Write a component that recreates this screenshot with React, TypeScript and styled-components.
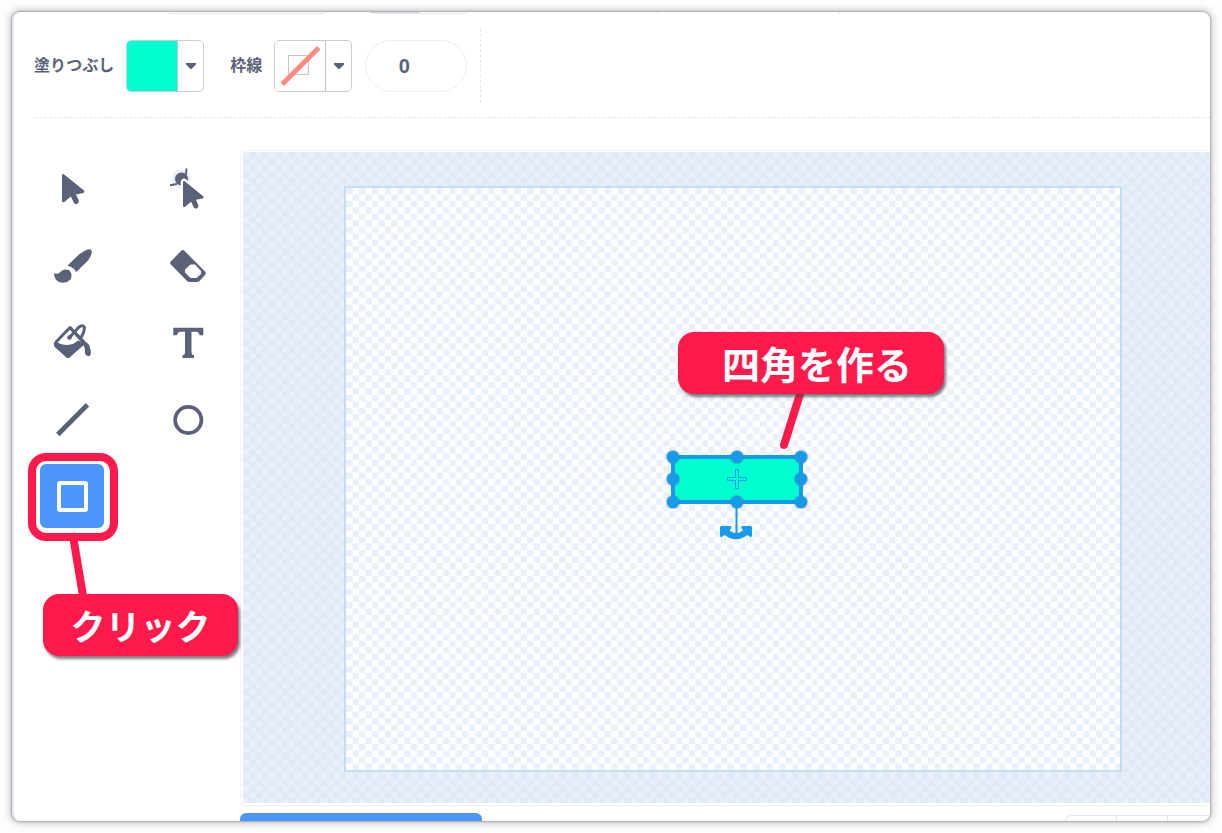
import React from 'react';
import styled, { createGlobalStyle, css } from 'styled-components';

const INK = '#5a6178';
const RED = '#ff1a4b';
const BLUE = '#4c97ff';
const SELECT = '#179aea';
const MINT = '#00ffd0';
const LINE = '#dfe6f3';

const GlobalStyle = createGlobalStyle`
  *, *::before, *::after { box-sizing: border-box; }
  body {
    margin: 0;
    background: #fefefe;
    color: ${INK};
    font-family: "Liberation Sans", "Noto Sans CJK JP", sans-serif;
    font-size: 16px;
  }
  button, input { font: inherit; color: inherit; margin: 0; }
`;

const Page = styled.div`
  min-height: 100vh;
  padding: 12px;
  display: flex;
`;

const Editor = styled.main`
  flex: 1;
  min-width: 0;
  display: flex;
  flex-direction: column;
  overflow: hidden;
  background: #fff;
  border-left: 2px solid #e4ebf6;
  border-radius: 8px;
  box-shadow: 0 0 2px 1px #a8a8a8, 0 0 8px 2px #c8c8c8;
`;

const PreviousRow = styled.div`
  display: flex;
  align-items: flex-end;
  height: 2px;
  padding-left: 146px;
  overflow: hidden;
`;

const CutPill = styled.div`
  flex: none;
  width: 173px;
  height: 40px;
  margin-right: 36px;
  border: 1px solid ${LINE};
  border-radius: 12px;
`;

const CutGroup = styled.div`
  flex: none;
  display: flex;
  width: 101px;
  height: 40px;
  margin-right: 187px;
  border: 1px solid ${LINE};
  border-radius: 5px;
`;

const CutHalf = styled.div`
  flex: 1;
  &:first-child { border-right: 1px solid #c5c9d3; border-bottom: 1px solid #d4d7df; }
`;

const CutSeparator = styled.div`
  flex: none;
  width: 182px;
  height: 2px;
  border-left: 1px solid ${LINE};
`;

const Toolbar = styled.div`
  display: flex;
  align-items: center;
  margin-left: 20px;
  padding: 15px 0 14px;
  border-bottom: 1px dashed ${LINE};
`;

const FieldLabel = styled.label`
  font-weight: 700;
  line-height: 24px;
  white-space: nowrap;
`;

const Swatch = styled.button`
  display: flex;
  flex: none;
  width: 78px;
  height: 52px;
  margin: 0 26px 0 12px;
  padding: 0;
  overflow: hidden;
  background: #fff;
  border: 1px solid #c9ccd8;
  border-radius: 5px;
  &:last-of-type { margin-right: 13px; }
`;

const SwatchColor = styled.span<{ $fill: string }>`
  display: grid;
  place-items: center;
  width: 51px;
  height: 50px;
  background: ${p => p.$fill};
  border-right: 1px solid #c0c3cd;
`;

const SwatchArrow = styled.span`
  flex: 1;
  height: 50px;
  display: grid;
  place-items: center;
`;

const WidthInput = styled.input`
  width: 102px;
  height: 52px;
  padding: 0 24px 0 0;
  text-align: center;
  font-size: 20px;
  font-weight: 700;
  background: #fff;
  border: 1px solid #e9eef7;
  border-radius: 26px;
`;

const Separator = styled.div`
  align-self: stretch;
  height: 74px;
  margin-left: 13px;
  border-left: 1px dashed ${LINE};
`;

const Body = styled.div`
  flex: 1;
  display: flex;
  padding-top: 32px;
`;

const Tools = styled.div`
  flex: none;
  display: grid;
  grid-template-columns: 64px 64px;
  grid-auto-rows: 64px;
  column-gap: 52px;
  row-gap: 13px;
  align-content: start;
  width: 226px;
  padding: 6px 0 0 26px;
`;

const ToolCell = styled.div`
  position: relative;
`;

const ToolButton = styled.button<{ $active?: boolean }>`
  display: grid;
  place-items: center;
  width: 64px;
  height: 64px;
  padding: 0;
  border: 0;
  border-radius: 6px;
  background: ${p => (p.$active ? BLUE : 'transparent')};
  svg { display: block; }
`;

const Workspace = styled.div`
  flex: 1;
  min-width: 0;
  display: flex;
  flex-direction: column;
`;

const CanvasFrame = styled.div`
  flex: 1;
  display: flex;
  padding: 1px 0 2px 2px;
  border: 1px solid #eef3fa;
  border-right: 0;
  border-radius: 5px 0 0 5px;
`;

const Surround = styled.section`
  position: relative;
  flex: 1;
  display: flex;
  padding: 34px 88px 31px 101px;
`;

const Checker = styled.svg`
  position: absolute;
  inset: 0;
  width: 100%;
  height: 100%;
`;

const Artboard = styled.div`
  position: relative;
  flex: 1;
  border: 2px solid #c5dcf7;
`;

const Selection = styled.svg`
  position: absolute;
  left: calc(50% - 73px);
  top: calc(50% - 89px);
  overflow: visible;
`;

const Footer = styled.div`
  flex: none;
  display: flex;
  align-items: flex-end;
  justify-content: space-between;
  height: 15px;
  padding-top: 7px;
`;

const ConvertButton = styled.button`
  width: 242px;
  height: 8px;
  padding: 0;
  border: 0;
  border-radius: 6px 6px 0 0;
  background: ${BLUE};
`;

const ZoomGroup = styled.div`
  display: flex;
  width: 145px;
  height: 6px;
  border: 1px solid ${LINE};
  border-width: 1px 0 0 1px;
  border-radius: 6px 0 0 0;
`;

const ZoomPart = styled.button`
  flex: none;
  width: 51px;
  height: 5px;
  padding: 0;
  border: 0;
  border-right: 1px solid ${LINE};
  background: transparent;
  &:last-child { width: 40px; border-right: 0; }
`;

const Ring = styled.div`
  position: absolute;
  z-index: 2;
  left: -12px;
  top: -11px;
  width: 90px;
  height: 88px;
  border: 8px solid ${RED};
  border-radius: 18px;
  pointer-events: none;
`;

const Pointer = styled.svg<{ $place: 'below' | 'canvas' }>`
  position: absolute;
  z-index: 3;
  ${p =>
    p.$place === 'below'
      ? css`left: 24px; top: 72px;`
      : css`left: calc(50% + 42px); top: calc(50% - 90px);`}
`;

const Tag = styled.div<{ $place: 'below' | 'canvas' }>`
  position: absolute;
  z-index: 4;
  height: 62px;
  line-height: 62px;
  text-align: center;
  white-space: nowrap;
  color: #fff;
  background: ${RED};
  border-radius: 16px;
  box-shadow: 2px 3px 3px rgba(70, 70, 80, 0.7);
  font-family: "Noto Sans CJK JP", sans-serif;
  font-weight: 700;
  ${p =>
    p.$place === 'below'
      ? css`left: 3px; top: 130px; width: 195px; font-size: 35px;`
      : css`left: calc(50% - 55px); top: calc(50% - 147px); width: 266px; padding-left: 12px; font-size: 38px;`}
`;

const Caret = () => (
  <svg width="12" height="8" viewBox="0 0 12 8" aria-hidden="true">
    <path d="M1.4 1h9.2q1.2.3.3 1.4L7 6.6Q6 7.6 5 6.6L1.100 2.400Q.2 1.300 1.400 1Z" fill={INK} />
  </svg>
);

const NoColor = () => (
  <svg width="50" height="50" viewBox="0 0 50 50" aria-hidden="true">
    <rect x="13.500" y="14.500" width="20" height="19" fill="none" stroke="#c3c6cf" />
    <path d="M9 41.500 42 8.500" stroke="#ff8a80" strokeWidth="5" strokeLinecap="square" />
  </svg>
);

const arrow = 'M1.500 0 22 16.600Q23.200 18.600 21.500 19L14 20.500 16.700 26.200Q17 30.500 13.300 29.900L12 29 8.800 22.600 2.300 28Q.1 29 0 27V1Q.2-.4 1.500 0Z';

const icons: Record<string, React.ReactNode> = {
  select: <path d={arrow} transform="translate(22 18)" fill={INK} />,
  reshape: (
    <>
      <circle cx="25.500" cy="23" r="9.500" fill="#e8eef9" />
      <path d="M14 29.200 21 28M30.600 12.500 29.600 20" fill="none" stroke={INK} strokeWidth="2" />
      <circle cx="25.500" cy="23" r="6.500" fill={INK} />
      <path d={arrow} transform="translate(27 25) scale(.92)" fill={INK} stroke="#fff" strokeWidth="5" paintOrder="stroke" />
    </>
  ),
  brush: (
    <g fill={INK} transform="translate(0 1)">
      <path d="M50.500 15.500Q54 18 48 26.500L36 38.300Q35.300 34.300 27.500 31.500L39 20.500Q47.500 14.500 50.500 15.500Z" />
      <path d="M14 39.200Q18.500 41 20.500 37.700 25 34 29.500 36.500 33 41 30.500 45.500 25 51 18 47.500 14 44 14 39.200Z" />
    </g>
  ),
  eraser: (
    <path
      transform="translate(0 1)"
      fill={INK}
      fillRule="evenodd"
      d="M25.500 16.500Q26.800 15.300 28.100 16.500L49 37.500Q50.500 39 49 41L43.500 47Q42.500 48 41 48H33.500Q32 48 31 47L14.800 30.500Q13.500 29 14.800 27.500ZM34.500 30.500 29 35.500V38.500L34.500 44H40.500L45 40V37L39 30.500Z"
    />
  ),
  fill: (
    <>
      <path d="M16.500 31.500 30 17.500 43.500 32.500 28 46.500 16 36Q14.500 34 16.500 31.500Z" fill="#fff" stroke={INK} strokeWidth="3" strokeLinejoin="round" />
      <path d="M16 31.500Q21 35 27.500 35 34 34.500 38 30.500L45.500 33.500 29.500 47.500Q28 48.500 26.500 47.500L14.800 36.500Q13.500 34 16 31.500Z" fill={INK} />
      <path d="M43.500 30.500Q50 34 50 38 52 44.500 49.500 46 46 46.500 45 43.500 45.500 36 41 32Z" fill={INK} />
      <path d="M29.500 27.500 38.500 17.500Q43 14 44.500 17.500 44 24 40 28.500" fill="none" stroke={INK} strokeWidth="3" strokeLinecap="round" />
      <path d="M30 17.500 44 32" stroke={INK} strokeWidth="3" />
      <circle cx="29.500" cy="27.500" r="2.300" fill={INK} />
    </>
  ),
  text: (
    <path d="M17.300 17.700H47.300V25.300H43.500Q43 21.800 40 21.800H35.500V42.500Q35.500 45 38 45.200V48H26.500V45.200Q29 45 29 42.500V21.800H24.500Q21.500 21.800 21 25.300H17.300Z" fill={INK} />
  ),
  line: <path d="M17.800 47.500 47.500 17.800" stroke={INK} strokeWidth="4.800" />,
  circle: <circle cx="32.300" cy="33" r="13.100" fill="none" stroke={INK} strokeWidth="3.800" />,
  rect: <rect x="19" y="19" width="27" height="27" rx="1" fill="none" stroke="#fff" strokeWidth="4" />,
};

const toolNames: [string, string][] = [
  ['select', '選択'],
  ['reshape', '形を変える'],
  ['brush', '筆'],
  ['eraser', '消しゴム'],
  ['fill', '塗りつぶし'],
  ['text', 'テキスト'],
  ['line', '直線'],
  ['circle', '円'],
];

const ToolIcon = ({ name }: { name: string }) => (
  <svg width="64" height="64" viewBox="0 0 64 64" aria-hidden="true">{icons[name]}</svg>
);

const Checkerboard = ({ id, base, tile }: { id: string; base: string; tile: string }) => (
  <Checker aria-hidden="true">
    <defs>
      <pattern id={id} width="12.930" height="12.930" patternUnits="userSpaceOnUse">
        <rect width="13" height="13" fill={base} />
        <path d="M0 0h6.465v6.465H0ZM6.465 6.465H12.930V12.930H6.465Z" fill={tile} />
      </pattern>
    </defs>
    <rect width="100%" height="100%" fill={`url(#${id})`} />
  </Checker>
);

const handles = [
  [13, 67], [77, 67], [141, 67],
  [13, 89], [141, 89],
  [13, 112], [77, 112], [141, 112],
];

export default function App() {
  return (
    <Page>
      <GlobalStyle />
      <Editor>
        <PreviousRow aria-hidden="true">
          <CutPill />
          <CutGroup><CutHalf /><CutHalf /></CutGroup>
          <CutSeparator />
          <CutSeparator />
        </PreviousRow>
        <Toolbar>
          <FieldLabel htmlFor="fill">塗りつぶし</FieldLabel>
          <Swatch id="fill" type="button">
            <SwatchColor $fill={MINT} />
            <SwatchArrow><Caret /></SwatchArrow>
          </Swatch>
          <FieldLabel htmlFor="outline">枠線</FieldLabel>
          <Swatch id="outline" type="button">
            <SwatchColor $fill="#fff"><NoColor /></SwatchColor>
            <SwatchArrow><Caret /></SwatchArrow>
          </Swatch>
          <WidthInput aria-label="枠線の太さ" defaultValue="0" />
          <Separator />
        </Toolbar>
        <Body>
          <Tools>
            {toolNames.map(([name, label]) => (
              <ToolButton key={name} type="button" aria-label={label}>
                <ToolIcon name={name} />
              </ToolButton>
            ))}
            <ToolCell>
              <ToolButton $active type="button" aria-label="四角形">
                <ToolIcon name="rect" />
              </ToolButton>
              <Ring />
              <Pointer $place="below" width="30" height="66" viewBox="0 0 30 66" aria-hidden="true">
                <path d="M9 0 20 66" stroke={RED} strokeWidth="8" />
              </Pointer>
              <Tag $place="below">クリック</Tag>
            </ToolCell>
          </Tools>
          <Workspace>
            <CanvasFrame>
              <Surround>
                <Checkerboard id="outside" base="#e1e9f5" tile="#eaf0fa" />
                <Artboard>
                  <Checkerboard id="inside" base="#ffffff" tile="#eaf0fa" />
                  <Selection width="160" height="150" viewBox="0 0 160 150" aria-hidden="true">
                    <rect x="13" y="67" width="128" height="45" fill={MINT} stroke={SELECT} strokeWidth="4" />
                    <path d="M76.500 112V144" stroke={SELECT} strokeWidth="2" />
                    <path
                      d="M60 137.500Q60 136 61.500 136H70Q72.500 136.300 71 138.500L69.500 140.500Q76 145.500 83 140.500L81.500 138.500Q80.500 136.300 83 136H90.500Q92 136 92 137.500V146Q91 148 89.500 146.500L87.500 145Q76 153.500 64.500 145L62.500 146.500Q60.500 148 60 146Z"
                      fill={SELECT}
                    />
                    <path d="M75.500 79.500h3v8h8v3h-8v8h-3v-8h-8v-3h8Z" fill="none" stroke={SELECT} />
                    {handles.map(([x, y]) => (
                      <g key={`${x}-${y}`}>
                        <circle cx={x} cy={y} r="7.500" fill="#5f7480" fillOpacity=".25" />
                        <circle cx={x} cy={y} r="6.300" fill={SELECT} />
                      </g>
                    ))}
                  </Selection>
                  <Pointer $place="canvas" width="32" height="66" viewBox="0 0 32 66" aria-hidden="true">
                    <path d="M26 2 9 56" stroke={RED} strokeWidth="8" strokeLinecap="round" />
                  </Pointer>
                  <Tag $place="canvas">四角を作る</Tag>
                </Artboard>
              </Surround>
            </CanvasFrame>
            <Footer>
              <ConvertButton type="button" aria-label="ビットマップに変換" />
              <ZoomGroup>
                <ZoomPart type="button" aria-label="縮小" />
                <ZoomPart type="button" aria-label="等倍" />
                <ZoomPart type="button" aria-label="拡大" />
              </ZoomGroup>
            </Footer>
          </Workspace>
        </Body>
      </Editor>
    </Page>
  );
}
